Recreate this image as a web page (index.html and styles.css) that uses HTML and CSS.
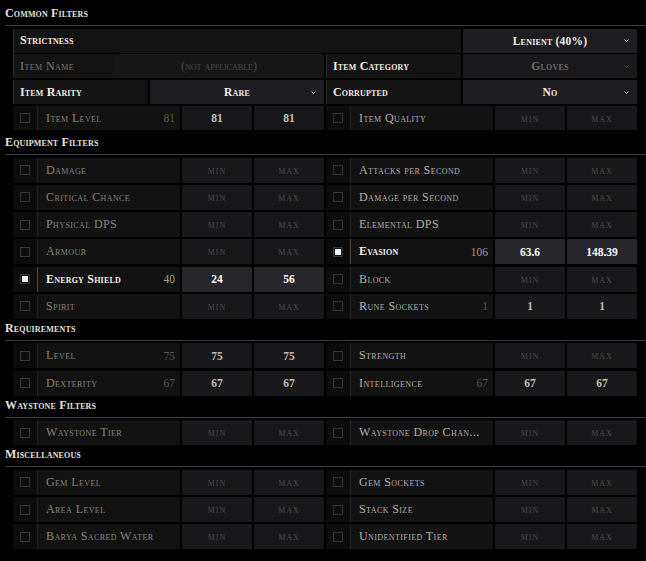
FILE: index.html
```html
<!DOCTYPE html>
<html lang="en">
<head>
<meta charset="utf-8">
<title>Filters</title>
<link rel="stylesheet" href="styles.css">
</head>
<body>
<div class="page">

  <section class="sec sec-common">
    <h2 class="sec-title">Common Filters</h2>
    <div class="rows rows-common">
      <div class="full">
        <div class="clabel">Strictness</div>
        <div class="dd"><span class="dd-val">Lenient (40%)</span><svg viewBox="0 0 5 3" width="5" height="3"><path d="M0.5 0.5 L2.5 2.5 L4.5 0.5" fill="none" stroke="currentColor" stroke-width="1"/></svg></div>
      </div>
      <div class="pair">
        <div class="half-name">
          <div class="clabel dim">Item Name</div>
          <div class="na">(not applicable)</div>
        </div>
        <div class="half-dd">
          <div class="clabel">Item Category</div>
          <div class="dd dd-dim"><span class="dd-val">Gloves</span><svg viewBox="0 0 5 3" width="5" height="3"><path d="M0.5 0.5 L2.5 2.5 L4.5 0.5" fill="none" stroke="currentColor" stroke-width="1"/></svg></div>
        </div>
      </div>
      <div class="pair">
        <div class="half-dd">
          <div class="clabel">Item Rarity</div>
          <div class="dd"><span class="dd-val">Rare</span><svg viewBox="0 0 5 3" width="5" height="3"><path d="M0.5 0.5 L2.5 2.5 L4.5 0.5" fill="none" stroke="currentColor" stroke-width="1"/></svg></div>
        </div>
        <div class="half-dd">
          <div class="clabel">Corrupted</div>
          <div class="dd"><span class="dd-val">No</span><svg viewBox="0 0 5 3" width="5" height="3"><path d="M0.5 0.5 L2.5 2.5 L4.5 0.5" fill="none" stroke="currentColor" stroke-width="1"/></svg></div>
        </div>
      </div>
      <div class="pair">
        <div class="filter">
          <div class="name"><div class="cb-cell"><span class="cb"></span></div><div class="lab"><span>Item Level</span><span class="num">81</span></div></div>
          <div class="in v">81</div><div class="in v">81</div>
        </div>
        <div class="filter">
          <div class="name"><div class="cb-cell"><span class="cb"></span></div><div class="lab r"><span>Item Quality</span></div></div>
          <div class="in">min</div><div class="in">max</div>
        </div>
      </div>
    </div>
  </section>

  <section class="sec">
    <h2 class="sec-title">Equipment Filters</h2>
    <div class="rows">
      <div class="pair">
        <div class="filter">
          <div class="name"><div class="cb-cell"><span class="cb"></span></div><div class="lab"><span>Damage</span></div></div>
          <div class="in">min</div><div class="in">max</div>
        </div>
        <div class="filter">
          <div class="name"><div class="cb-cell"><span class="cb"></span></div><div class="lab r"><span>Attacks per Second</span></div></div>
          <div class="in">min</div><div class="in">max</div>
        </div>
      </div>
      <div class="pair">
        <div class="filter">
          <div class="name"><div class="cb-cell"><span class="cb"></span></div><div class="lab"><span>Critical Chance</span></div></div>
          <div class="in">min</div><div class="in">max</div>
        </div>
        <div class="filter">
          <div class="name"><div class="cb-cell"><span class="cb"></span></div><div class="lab r"><span>Damage per Second</span></div></div>
          <div class="in">min</div><div class="in">max</div>
        </div>
      </div>
      <div class="pair">
        <div class="filter">
          <div class="name"><div class="cb-cell"><span class="cb"></span></div><div class="lab"><span>Physical DPS</span></div></div>
          <div class="in">min</div><div class="in">max</div>
        </div>
        <div class="filter">
          <div class="name"><div class="cb-cell"><span class="cb"></span></div><div class="lab r"><span>Elemental DPS</span></div></div>
          <div class="in">min</div><div class="in">max</div>
        </div>
      </div>
      <div class="pair">
        <div class="filter">
          <div class="name"><div class="cb-cell"><span class="cb"></span></div><div class="lab"><span>Armour</span></div></div>
          <div class="in">min</div><div class="in">max</div>
        </div>
        <div class="filter">
          <div class="name"><div class="cb-cell"><span class="cb on"></span></div><div class="lab on"><span>Evasion</span><span class="num">106</span></div></div>
          <div class="in v on">63.6</div><div class="in v on">148.39</div>
        </div>
      </div>
      <div class="pair">
        <div class="filter">
          <div class="name"><div class="cb-cell"><span class="cb on"></span></div><div class="lab on"><span>Energy Shield</span><span class="num">40</span></div></div>
          <div class="in v on">24</div><div class="in v on">56</div>
        </div>
        <div class="filter">
          <div class="name"><div class="cb-cell"><span class="cb"></span></div><div class="lab r"><span>Block</span></div></div>
          <div class="in">min</div><div class="in">max</div>
        </div>
      </div>
      <div class="pair">
        <div class="filter">
          <div class="name"><div class="cb-cell"><span class="cb"></span></div><div class="lab"><span>Spirit</span></div></div>
          <div class="in">min</div><div class="in">max</div>
        </div>
        <div class="filter">
          <div class="name"><div class="cb-cell"><span class="cb"></span></div><div class="lab r"><span>Rune Sockets</span><span class="num">1</span></div></div>
          <div class="in v">1</div><div class="in v">1</div>
        </div>
      </div>
    </div>
  </section>

  <section class="sec">
    <h2 class="sec-title">Requirements</h2>
    <div class="rows">
      <div class="pair">
        <div class="filter">
          <div class="name"><div class="cb-cell"><span class="cb"></span></div><div class="lab"><span>Level</span><span class="num">75</span></div></div>
          <div class="in v">75</div><div class="in v">75</div>
        </div>
        <div class="filter">
          <div class="name"><div class="cb-cell"><span class="cb"></span></div><div class="lab r"><span>Strength</span></div></div>
          <div class="in">min</div><div class="in">max</div>
        </div>
      </div>
      <div class="pair">
        <div class="filter">
          <div class="name"><div class="cb-cell"><span class="cb"></span></div><div class="lab"><span>Dexterity</span><span class="num">67</span></div></div>
          <div class="in v">67</div><div class="in v">67</div>
        </div>
        <div class="filter">
          <div class="name"><div class="cb-cell"><span class="cb"></span></div><div class="lab r"><span>Intelligence</span><span class="num">67</span></div></div>
          <div class="in v">67</div><div class="in v">67</div>
        </div>
      </div>
    </div>
  </section>

  <section class="sec">
    <h2 class="sec-title">Waystone Filters</h2>
    <div class="rows">
      <div class="pair">
        <div class="filter">
          <div class="name"><div class="cb-cell"><span class="cb"></span></div><div class="lab"><span>Waystone Tier</span></div></div>
          <div class="in">min</div><div class="in">max</div>
        </div>
        <div class="filter">
          <div class="name"><div class="cb-cell"><span class="cb"></span></div><div class="lab r"><span>Waystone Drop Chan...</span></div></div>
          <div class="in">min</div><div class="in">max</div>
        </div>
      </div>
    </div>
  </section>

  <section class="sec">
    <h2 class="sec-title">Miscellaneous</h2>
    <div class="rows">
      <div class="pair">
        <div class="filter">
          <div class="name"><div class="cb-cell"><span class="cb"></span></div><div class="lab"><span>Gem Level</span></div></div>
          <div class="in">min</div><div class="in">max</div>
        </div>
        <div class="filter">
          <div class="name"><div class="cb-cell"><span class="cb"></span></div><div class="lab r"><span>Gem Sockets</span></div></div>
          <div class="in">min</div><div class="in">max</div>
        </div>
      </div>
      <div class="pair">
        <div class="filter">
          <div class="name"><div class="cb-cell"><span class="cb"></span></div><div class="lab"><span>Area Level</span></div></div>
          <div class="in">min</div><div class="in">max</div>
        </div>
        <div class="filter">
          <div class="name"><div class="cb-cell"><span class="cb"></span></div><div class="lab r"><span>Stack Size</span></div></div>
          <div class="in">min</div><div class="in">max</div>
        </div>
      </div>
      <div class="pair">
        <div class="filter">
          <div class="name"><div class="cb-cell"><span class="cb"></span></div><div class="lab"><span>Barya Sacred Water</span></div></div>
          <div class="in">min</div><div class="in">max</div>
        </div>
        <div class="filter">
          <div class="name"><div class="cb-cell"><span class="cb"></span></div><div class="lab r"><span>Unidentified Tier</span></div></div>
          <div class="in">min</div><div class="in">max</div>
        </div>
      </div>
    </div>
  </section>

</div>
</body>
</html>
```

FILE: styles.css
```css
* { box-sizing: border-box; margin: 0; padding: 0; }

html, body { background: #000; }

body {
  width: 646px;
  height: 561px;
  overflow: hidden;
  font-family: "Liberation Serif", "DejaVu Serif", serif;
  font-variant: small-caps;
  color: #b0aca6;
}

.page { padding-top: 4px; }

.sec-title {
  margin: 0 0 2.7px 5px;
  padding: 2px 0 5px;
  font-size: 12px;
  line-height: 14px;
  font-weight: 700;
  letter-spacing: 0.15px;
  color: #e6e2dc;
  border-bottom: 1px solid #3c3c46;
}

.rows {
  display: flex;
  flex-direction: column;
  gap: 2.2px;
  padding-left: 13px;
}

.rows-common { gap: 1.8px; margin-bottom: 3px; }

.pair {
  display: grid;
  grid-template-columns: 311px 311px;
  column-gap: 2px;
  height: 25px;
}

.rows-common .pair,
.rows-common .full { height: 24px; }

.full {
  display: grid;
  grid-template-columns: 1fr 174px;
  column-gap: 2px;
  width: 624px;
}

.half-dd {
  display: grid;
  grid-template-columns: 1fr 174px;
  column-gap: 2px;
}

.half-name {
  display: grid;
  grid-template-columns: 101px 1fr;
}

.clabel {
  background: #131313;
  border-left: 1px solid #2e2e2e;
  padding-left: 6px;
  display: flex;
  align-items: center;
  font-size: 12px;
  letter-spacing: 0.15px;
  font-weight: 700;
  color: #efebe5;
}

.clabel.dim { color: #7c7873; font-weight: 400; letter-spacing: 0.4px; }

.na {
  background: #161616;
  display: flex;
  align-items: center;
  justify-content: center;
  font-size: 12px;
  letter-spacing: 0;
  color: #4a4a4a;
}

.dd {
  background: #1e1e22;
  display: grid;
  grid-template-columns: 22px 1fr 22px;
  align-items: center;
  font-size: 11.5px;
  font-weight: 700;
  letter-spacing: 0.2px;
  color: #f2eee8;
}

.dd-val { grid-column: 2; text-align: center; }

.dd svg { grid-column: 3; justify-self: center; color: #c4c4c4; display: block; }

.dd-dim { background: #19191c; color: #6d6a66; }
.dd-dim svg { color: #4e4e4e; }

.filter {
  display: grid;
  grid-template-columns: 167px 1fr 1fr;
  column-gap: 2px;
}

.name { display: flex; }

.cb-cell {
  width: 24px;
  background: #0c0c0c;
  display: grid;
  place-items: center;
}

.cb {
  width: 10px;
  height: 10px;
  border: 1px solid #353535;
  background: #0e0e0e;
  display: grid;
  place-items: center;
}

.cb.on::after {
  content: "";
  width: 6px;
  height: 6px;
  background: #f2f2f2;
}

.lab {
  flex: 1;
  background: #121212;
  border-left: 1px solid #2a2622;
  display: flex;
  align-items: center;
  justify-content: space-between;
  padding: 0 5px 0 8px;
  font-size: 12px;
  letter-spacing: 0.4px;
  color: #88847f;
  white-space: nowrap;
}

.lab.r { color: #b4b0aa; }

.lab.on {
  color: #f4f0ea;
  font-weight: 700;
  letter-spacing: 0.2px;
  border-left-color: #5c4330;
}

.num {
  color: #5a5856;
  letter-spacing: 0;
  font-weight: 400;
  font-size: 11.5px;
}

.lab.on .num { color: #a19d98; }

.in {
  background: #18181a;
  display: flex;
  align-items: center;
  justify-content: center;
  font-size: 12px;
  letter-spacing: 1px;
  color: #4b4b4b;
}

.in.v {
  color: #c2beb8;
  font-weight: 700;
  font-size: 11.5px;
  letter-spacing: 0;
}

.in.on {
  background: #27272b;
  color: #fbfbfb;
}
```
